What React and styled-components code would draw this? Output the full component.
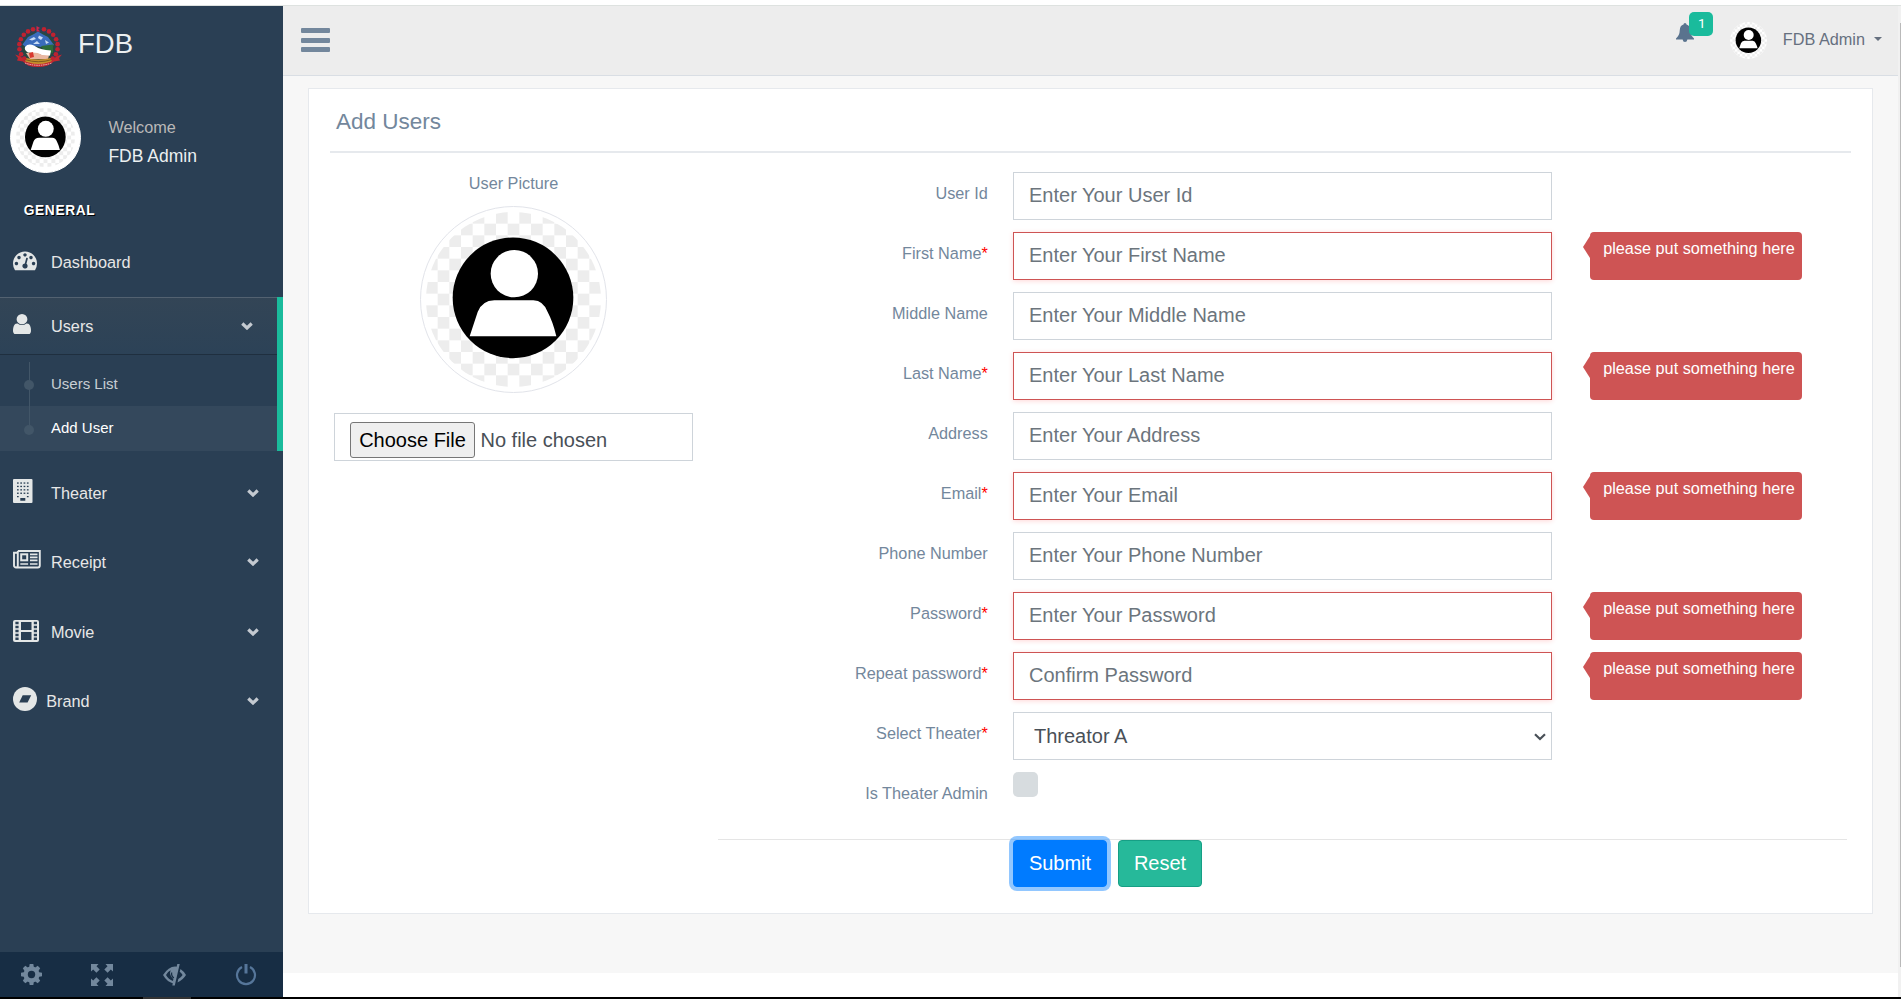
import React from "react";
import styled, { createGlobalStyle, css } from "styled-components";

const GlobalStyle = createGlobalStyle`
  *, *::before, *::after { box-sizing: border-box; }
  body {
    margin: 0;
    background: #fff;
    color: #73879c;
    font-family: Arial, "Liberation Sans", sans-serif;
    font-size: 16.25px;
    overflow: hidden;
  }
  input, select, button { font-family: inherit; }
`;

/* ---------- page frame ---------- */

const Page = styled.div`
  display: flex;
  flex-direction: column;
  height: 999px;
  width: 1901px;
`;

const TopStrip = styled.div`
  flex: none;
  height: 6px;
  background: #fff;
  border-bottom: 1px solid #dee2e0;
`;

const Body = styled.div`
  display: flex;
  height: 991px;
`;

const BottomStrip = styled.div`
  flex: none;
  height: 2px;
  padding-left: 143px;
  background: #000;
`;

const BottomMark = styled.div`
  width: 48px;
  height: 2px;
  background: #333;
`;

const ScrollTrack = styled.div`
  width: 3px;
  padding: 17px 0 0 2px;
  background: #f1f1f1;
`;

const ScrollThumb = styled.div`
  height: 944px;
  background: #b9b9b9;
`;

/* ---------- sidebar ---------- */

const Sidebar = styled.aside`
  display: flex;
  flex-direction: column;
  width: 283px;
  background: #2a3f54;
`;

const Brand = styled.div`
  display: flex;
  align-items: center;
  gap: 16px;
  height: 75px;
  padding-left: 15px;
  color: #ecf0f1;
  font-size: 27.5px;
  svg { margin-top: 5px; }
`;

const Profile = styled.div`
  display: flex;
  gap: 27px;
  padding: 21px 0 0 10.4px;
`;

const ProfileText = styled.div`
  padding-top: 13px;
  line-height: 24px;
`;

const Welcome = styled.div`
  color: #bab8b8;
`;

const ProfileName = styled.div`
  margin-top: 5px;
  color: #ecf0f1;
  font-size: 17.5px;
`;

const SectionTitle = styled.h3`
  margin: 28px 0 12px;
  padding-left: 23.75px;
  color: #fff;
  font-size: 13.75px;
  font-weight: bold;
  letter-spacing: 0.625px;
  line-height: 20px;
  text-shadow: 1px 1px #000;
  text-transform: uppercase;
`;

const MenuItem = styled.a`
  display: flex;
  align-items: center;
  height: ${(p) => (p.$active ? 57 : 58)}px;
  margin-bottom: ${(p) => p.$gap ?? 11.3}px;
  padding: 0 24px 0 13px;
  color: #e7e7e7;
  ${(p) =>
    p.$active &&
    css`
      padding-top: 1px;
      background: linear-gradient(#334556, #2c4257), #2a3f54;
      box-shadow: rgba(0, 0, 0, 0.25) 0 1px 0, inset rgba(255, 255, 255, 0.16) 0 1px 0;
    `}
`;

const MenuIcon = styled.span`
  display: flex;
  align-self: stretch;
  width: ${(p) => p.$width ?? 38}px;
  padding-top: ${(p) => p.$drop}px;
  color: #e4e7e7;
`;

const MenuLabel = styled.span`
  flex: 1;
`;

const ChevronIcon = styled.svg`
  margin-bottom: 1px;
`;

const ActiveGroup = styled.div`
  height: 154px;
  margin-bottom: 13.5px;
  border-right: 6px solid #1abb9c;
`;

const SubMenu = styled.ul`
  margin: 0;
  padding: 7px 0 0;
  list-style: none;
`;

const SubItem = styled.li`
  position: relative;
  height: 45px;
  padding-left: 51px;
  background: ${(p) => (p.$current ? "rgba(255, 255, 255, 0.05)" : "none")};
  color: ${(p) => (p.$current ? "#fff" : "rgba(255, 255, 255, 0.75)")};
  font-size: 15px;
  line-height: ${(p) => (p.$current ? 44 : 46)}px;

  &::before {
    content: "";
    position: absolute;
    left: 29px;
    top: ${(p) => (p.$current ? 0 : 1)}px;
    height: ${(p) => (p.$current ? 24 : 44)}px;
    width: 1px;
    background: #425668;
  }
  &::after {
    content: "";
    position: absolute;
    left: 24px;
    top: 19px;
    width: 10px;
    height: 10px;
    border-radius: 50%;
    background: #425668;
  }
`;

const SidebarFooter = styled.div`
  display: flex;
  justify-content: space-between;
  align-items: center;
  height: 45px;
  margin-top: auto;
  padding: 0 25.5px 0 20.5px;
  background: #172d44;
  color: #73889d;
`;

/* ---------- header ---------- */

const Main = styled.div`
  display: flex;
  flex-direction: column;
  width: 1615px;
`;

const Header = styled.header`
  display: flex;
  flex: none;
  justify-content: space-between;
  height: 70px;
  padding: 0 16px 0 18px;
  border-bottom: 1px solid #d9dee4;
  background: #ededed;
`;

const MenuToggle = styled.div`
  display: flex;
  flex-direction: column;
  gap: 4.6px;
  width: 29px;
  padding-top: 22px;
`;

const ToggleBar = styled.div`
  height: 5px;
  border-radius: 1px;
  background: #73879c;
`;

const HeaderRight = styled.div`
  display: flex;
  align-items: flex-start;
`;

const Bell = styled.div`
  position: relative;
  margin: 17px 36px 0 0;
  svg { display: block; }
`;

const Badge = styled.span`
  position: absolute;
  left: 13px;
  top: -11px;
  width: 24px;
  height: 24px;
  border-radius: 5px;
  background: #1abb9c;
  color: #fff;
  font-family: Roboto, sans-serif;
  font-size: 13.5px;
  line-height: 22.5px;
  padding-left: 2px;
  text-align: center;
`;

const HeaderAvatar = styled.div`
  display: flex;
  margin: 16px 16px 0 0;
`;

const HeaderUser = styled.div`
  display: flex;
  align-items: center;
  height: 66px;
  color: #66707f;
`;

const Caret = styled.span`
  margin: 0 0 0 9px;
  border: 4px solid transparent;
  border-top-color: #66707f;
  border-bottom: 0;
`;

/* ---------- card ---------- */

const Content = styled.main`
  flex: none;
  height: 897px;
  padding: 12px 25px 0;
  background: #f7f7f7;
`;

const Card = styled.section`
  height: 826px;
  padding: 0 21px;
  border: 1px solid #e6e9ed;
  background: #fff;
`;

const CardTitle = styled.h2`
  height: 64px;
  margin: 0;
  padding: 4px 6px 0;
  border-bottom: 2px solid #e6e9ed;
  font-size: 22.5px;
  font-weight: 400;
  line-height: 58px;
`;

const CardBody = styled.div`
  display: flex;
  gap: 25px;
  padding: 18px 4px 0;
`;

const PictureColumn = styled.div`
  display: flex;
  flex-direction: column;
  align-items: center;
  width: 359px;
`;

const PictureLabel = styled.div`
  margin-bottom: 11px;
  line-height: 24px;
`;

const AvatarFrame = styled.div`
  display: flex;
  flex: none;
  align-self: ${(p) => (p.$small ? "flex-start" : "center")};
  padding: 5px;
  border: 1px solid ${(p) => p.$border};
  border-radius: 50%;
  background: #fff;
`;

const FileField = styled.div`
  display: flex;
  align-items: center;
  align-self: stretch;
  gap: 5.5px;
  height: 48px;
  margin-top: 20px;
  padding: 6px 15px 0;
  border: 1px solid #ced4da;
  color: #495057;
  font-size: 20px;
`;

const FileButton = styled.button`
  width: 125px;
  height: 36px;
  padding: 0;
  border: 1px solid #767676;
  border-radius: 3px;
  background: #efefef;
  color: #000;
  font-size: 20px;
`;

const Form = styled.form`
  display: flex;
  flex-direction: column;
  gap: 12px;
  width: 1129px;
  padding-top: 1px;
`;

const Row = styled.div`
  display: flex;
  height: 48px;
`;

const Label = styled.label`
  width: 269.8px;
  margin-right: 25.2px;
  padding-top: 10px;
  line-height: 23px;
  text-align: right;
`;

const Required = styled.span`
  color: red;
`;

const control = css`
  width: 539px;
  height: 48px;
  border: 1px solid #ced4da;
  border-radius: 0;
  outline: 0;
  background: #fff;
  color: #495057;
  font-size: 20px;
`;

const Input = styled.input`
  ${control}
  padding: 0 15px 2px;
  &::placeholder { color: #6c757d; opacity: 1; }
  ${(p) =>
    p.$invalid &&
    css`
      border-color: #ce5454;
      box-shadow: 0 1px 5px rgba(255, 0, 0, 0.16);
    `}
`;

const SelectWrap = styled.div`
  position: relative;
  svg {
    position: absolute;
    right: 6px;
    top: 21px;
  }
`;

const Select = styled.select`
  ${control}
  appearance: none;
  padding: 0 20px;
`;

const Alert = styled.div`
  position: relative;
  width: 212px;
  margin-left: 38px;
  padding: 3.5px 0 0 13.2px;
  border-radius: 4px;
  background: #ce5454;
  color: #fff;
  line-height: 24px;
  white-space: nowrap;

  &::before {
    content: "";
    position: absolute;
    left: -7px;
    top: 4px;
    border: 11px solid transparent;
    border-left-width: 0;
    border-right: 7px solid #ce5454;
  }
`;

const CheckBox = styled.span`
  width: 25px;
  height: 25px;
  border-radius: 5px;
  background: #d7dcdf;
`;

const Actions = styled.div`
  display: flex;
  gap: 11px;
  margin-top: 7px;
  padding-left: 295px;
  border-top: 1px solid #e5e5e5;
`;

const Button = styled.button`
  width: ${(p) => p.$width}px;
  height: 47px;
  padding: 0;
  border: 1px solid ${(p) => p.$border};
  border-radius: 4px;
  background: ${(p) => p.$color};
  box-shadow: ${(p) => (p.$focused ? "0 0 0 4px rgba(38, 143, 255, 0.5)" : "none")};
  color: #fff;
  font-size: 20px;
`;

/* ---------- drawings ---------- */

const cells = [];
for (let r = 0; r < 15; r++)
  for (let c = 0; c < 15; c++) if ((r + c) % 2 === 0) cells.push([c * 35, r * 35]);

function Avatar({ size, id }) {
  return (
    <svg width={size} height={size} viewBox="0 0 525 525">
      <clipPath id={id}>
        <circle cx="262.5" cy="262.5" r="262.5" />
      </clipPath>
      <g clipPath={`url(#${id})`}>
        <rect width="525" height="525" fill="#fff" />
        {cells.map(([x, y]) => (
          <rect key={`${x}-${y}`} x={x} y={y} width="35" height="35" fill="#ededed" />
        ))}
        <circle cx="261" cy="257.5" r="181" fill="#000" />
        <circle cx="265" cy="185" r="71" fill="#fff" />
        <path
          d="M131 373 L155 300 Q168 266 205 265 H322 Q352 266 365 300 Q381 330 391 373 Z"
          fill="#fff"
        />
      </g>
    </svg>
  );
}

function Emblem() {
  const petals = [];
  for (let i = 0; i < 17; i++) {
    const a = ((-222 + i * 16.5) * Math.PI) / 180;
    if (i !== 8) petals.push([23.5 + 19.3 * Math.cos(a), 20.5 + 18 * Math.sin(a)]);
  }
  return (
    <svg width="47" height="41" viewBox="0 0 47 41">
      <ellipse cx="23.5" cy="21" rx="16.5" ry="15" fill="#28483f" />
      <path d="M7.500 18.500 L13 11 L19 8 L23 5.500 L28 8.500 L33 11 L39 19 L32 22 L20 20 L12 22Z" fill="#3a6cbc" />
      <path d="M14 13.500l5-2.500 2 2-4 1.500zM24 9.500l4 2-2 2.500-3-2zM30 14l4 2.500-3 1.500zM18 18l4-3 3 3z" fill="#c9dcf4" />
      <path d="M26 20 L38 18.500 L38 27 L30 26Z" fill="#2c6b3a" />
      <path d="M10 21 Q13 17 19 19.500 Q25 24 36 24.500 L35 29.500 Q30 31 25 28.500 Q19 27 13 26.500 Q9 24 10 21Z" fill="#fff" />
      <path d="M11 27 Q22 25.500 27 29 L34 29.500 L33 33 H15Z" fill="#e9b7a0" />
      <path d="M14 27l4-1 1 5-4 1z" fill="#d8392f" />
      <path d="M9 31.500 Q23 35.500 38 31.500 L37 36 Q23 41 10 36Z" fill="#c58f2c" />
      <path d="M10 33.500 Q23 38 37 33.500" fill="none" stroke="#7a5a20" strokeWidth="1" />
      {petals.map(([x, y], i) => (
        <circle key={i} cx={x} cy={y} r="2.3" fill="#bf2230" />
      ))}
      <path d="M21.500 0l3.500 2-2 1 2 2.500h-3.500z" fill="#d3264b" />
      <path
        d="M0 28.500 L6 30.500 Q9 36 14 36.500 Q23 39.500 33 36.500 Q38 35.500 41 30.500 L47 28.500 L44 32 L45 34.500 L39 35.500 Q33 41 23 41 Q12 41 8 35.500 L2 34.500 L3 32Z"
        fill="#c22730"
      />
      <path d="M10 37 Q23 41.500 37 37" fill="none" stroke="#e9bfc0" strokeWidth="1" strokeDasharray="1.500 .8" />
    </svg>
  );
}

const DashboardIcon = () => (
  <svg width="24" height="24" viewBox="0 0 1792 1792" fill="currentColor">
    <path d="M384 1152q0-53-37.5-90.5t-90.5-37.5-90.5 37.5-37.5 90.5 37.5 90.5 90.5 37.5 90.5-37.5 37.5-90.5zm192-448q0-53-37.5-90.5t-90.5-37.5-90.5 37.5-37.5 90.5 37.5 90.5 90.5 37.5 90.5-37.5 37.5-90.5zm428 481l101-382q6-26-7.5-48.5t-38.5-29.5-48 6.5-30 39.5l-101 382q-60 5-107 43.5t-63 98.5q-20 77 20 146t117 89 146-20 89-117q16-60-6-117t-72-91zm660-33q0-53-37.5-90.5t-90.5-37.5-90.5 37.5-37.5 90.5 37.5 90.5 90.5 37.5 90.5-37.5 37.5-90.5zm-640-640q0-53-37.5-90.5t-90.5-37.5-90.5 37.5-37.5 90.5 37.5 90.5 90.5 37.5 90.5-37.5 37.5-90.5zm448 192q0-53-37.5-90.5t-90.5-37.5-90.5 37.5-37.5 90.5 37.5 90.5 90.5 37.5 90.5-37.5 37.5-90.5zm320 448q0 261-141 483-19 29-54 29h-1402q-35 0-54-29-141-221-141-483 0-182 71-348t191-286 286-191 348-71 348 71 286 191 191 286 71 348z" />
  </svg>
);

const UserIcon = () => (
  <svg width="18" height="20.5" viewBox="256 128 1280 1536" preserveAspectRatio="none" fill="currentColor">
    <path d="M1536 1399q0 109-62.5 187t-150.5 78h-854q-88 0-150.5-78t-62.5-187q0-85 8.5-160.5t31.5-152 58.5-131 94-89 134.5-34.5q131 128 313 128t313-128q76 0 134.5 34.5t94 89 58.5 131 31.5 152 8.5 160.5zm-256-887q0 159-112.5 271.5t-271.5 112.5-271.5-112.5-112.5-271.5 112.5-271.5 271.5-112.5 271.5 112.5 112.5 271.5z" />
  </svg>
);

const BuildingIcon = () => (
  <svg width="20" height="24" viewBox="0 0 20 24">
    <rect width="19.5" height="24" rx="1" fill="currentColor" />
    {[3.4, 6.8, 10.2, 13.6].map((y) =>
      [4, 7.3, 10.6, 13.9].map((x) => (
        <rect key={`${x}-${y}`} x={x} y={y} width="1.7" height="1.3" fill="#2a3f54" />
      ))
    )}
    <path d="M4 17h1.700v1.300H4zM13.900 17h1.700v1.300h-1.700zM7.300 19h5v2.800h-5z" fill="#2a3f54" />
  </svg>
);

const NewspaperIcon = () => (
  <svg width="28" height="19" viewBox="0 0 28 19" fill="none" stroke="currentColor">
    <path d="M4.800 1h22v14.500a2 2 0 0 1-2 2H3a2 2 0 0 1-2-2V2.800h3.500M4.800 1v14.500a1.800 1.800 0 0 1-1.800 2" strokeWidth="1.900" />
    <rect x="8.200" y="4.300" width="6" height="6" strokeWidth="2" />
    <path d="M17 4.300h7.500M17 7.300h7.500M17 10.300h7.500M7.300 14h7.800M17 14h7.500" strokeWidth="1.700" />
  </svg>
);

const FilmIcon = () => (
  <svg width="26" height="22" viewBox="0 0 26 22">
    <rect width="26" height="22" rx="2" fill="currentColor" />
    <path d="M8 2h10.500v8H8zM8 12h10.500v8H8z" fill="#2a3f54" />
    {[1.8, 5.8, 9.8, 13.8, 17.6].map((y) => (
      <path key={y} d={`M2.400 ${y}h3.200v2.400h-3.200zM20.800 ${y}h3.200v2.400h-3.200z`} fill="#2a3f54" />
    ))}
  </svg>
);

const BrandIcon = () => (
  <svg width="24" height="24" viewBox="0 0 24 24">
    <circle cx="12" cy="12" r="12" fill="currentColor" />
    <path d="M9.700 8.300h8.500l-3.600 7.300H6.200z" fill="#2a3f54" />
  </svg>
);

const Chevron = () => (
  <ChevronIcon width="12" height="8" viewBox="0 0 12 8">
    <path d="M1.300 1.500l4.700 4.500 4.700-4.500" fill="none" stroke="#c4cad1" strokeWidth="3.200" />
  </ChevronIcon>
);

const CogIcon = () => (
  <svg width="21" height="21" viewBox="0 0 21 21" fill="currentColor">
    {[0, 45, 90, 135].map((a) => (
      <path key={a} d="M8.700 0h3.600l.7 4v13l-.7 4H8.700L8 17V4z" transform={`rotate(${a} 10.500 10.500)`} />
    ))}
    <circle cx="10.500" cy="10.500" r="8" />
    <circle cx="10.500" cy="10.500" r="3.700" fill="#172d44" />
  </svg>
);

const FullscreenIcon = () => (
  <svg width="22" height="22" viewBox="0 0 22 22" fill="currentColor">
    {[0, 90, 180, 270].map((a) => (
      <path key={a} d="M0 0h7.500L5.500 2.200 8.700 5.400 5.400 8.700 2.200 5.500 0 7.500z" transform={`rotate(${a} 11 11)`} />
    ))}
  </svg>
);

const EyeCloseIcon = () => (
  <svg width="23" height="22" viewBox="0 0 23 22">
    <path d="M0 11Q5.500 2.500 12 2.500l2.600.3L10.300 19.400Q4 18 0 11z" fill="currentColor" />
    <path d="M3 11Q5 7.500 7.600 6.200 5.800 11 10.500 15.200l-.5 1.700Q5.500 15.500 3 11z" fill="#172d44" />
    <path d="M8.700 8.500Q8 12 11 14" fill="none" stroke="#172d44" strokeWidth="1.200" />
    <path d="M14.300 0h2.400L11.800 21.500H9.300z" fill="currentColor" />
    <path d="M17.500 5Q20.500 7 23 11q-3 5-8.500 7.400l.8-3.300Q18 13.500 19.600 11 18.500 9 16.700 7.700z" fill="currentColor" />
  </svg>
);

const PowerIcon = () => (
  <svg width="22" height="22" viewBox="0 0 22 22" fill="none" stroke="#56769a">
    <path d="M7 3.100a9 9 0 1 0 8 0" strokeWidth="2.200" />
    <path d="M11 0v9.500" strokeWidth="3" />
  </svg>
);

const BellIcon = () => (
  <svg width="18" height="19" viewBox="0 0 18 19" fill="#5a738e">
    <path d="M9 0q1.500 0 1.500 1.600Q14 2.600 14.200 7q.2 5.500 3.800 8.500v1H0v-1Q3.600 12.500 3.800 7 4 2.600 7.500 1.600 7.500 0 9 0zM6.600 16.500h4.800Q11 19 9 19t-2.400-2.500z" />
  </svg>
);

/* ---------- data ---------- */

const fields = [
  { label: "User Id", placeholder: "Enter Your User Id" },
  { label: "First Name", placeholder: "Enter Your First Name", required: true },
  { label: "Middle Name", placeholder: "Enter Your Middle Name" },
  { label: "Last Name", placeholder: "Enter Your Last Name", required: true },
  { label: "Address", placeholder: "Enter Your Address" },
  { label: "Email", placeholder: "Enter Your Email", required: true },
  { label: "Phone Number", placeholder: "Enter Your Phone Number" },
  { label: "Password", placeholder: "Enter Your Password", required: true },
  { label: "Repeat password", placeholder: "Confirm Password", required: true },
];

const sections = [
  { label: "Theater", icon: BuildingIcon, drop: 14.5 },
  { label: "Receipt", icon: NewspaperIcon, drop: 15.8 },
  { label: "Movie", icon: FilmIcon, drop: 17 },
  { label: "Brand", icon: BrandIcon, drop: 14.8, width: 33.2 },
];

export default function App() {
  return (
    <>
      <GlobalStyle />
      <Page>
        <TopStrip />
        <Body>
          <Sidebar>
            <Brand>
              <Emblem />
              FDB
            </Brand>
            <Profile>
              <AvatarFrame $border="#fff" $small>
                <Avatar size={59} id="side" />
              </AvatarFrame>
              <ProfileText>
                <Welcome>Welcome</Welcome>
                <ProfileName>FDB Admin</ProfileName>
              </ProfileText>
            </Profile>
            <SectionTitle>General</SectionTitle>
            <MenuItem $gap={6}>
              <MenuIcon $drop={14.5}>
                <DashboardIcon />
              </MenuIcon>
              <MenuLabel>Dashboard</MenuLabel>
            </MenuItem>
            <ActiveGroup>
              <MenuItem $active $gap={0}>
                <MenuIcon $drop={15.5}>
                  <UserIcon />
                </MenuIcon>
                <MenuLabel>Users</MenuLabel>
                <Chevron />
              </MenuItem>
              <SubMenu>
                <SubItem>Users List</SubItem>
                <SubItem $current>Add User</SubItem>
              </SubMenu>
            </ActiveGroup>
            {sections.map(({ label, icon: Icon, drop, width }) => (
              <MenuItem key={label}>
                <MenuIcon $drop={drop} $width={width}>
                  <Icon />
                </MenuIcon>
                <MenuLabel>{label}</MenuLabel>
                <Chevron />
              </MenuItem>
            ))}
            <SidebarFooter>
              <CogIcon />
              <FullscreenIcon />
              <EyeCloseIcon />
              <PowerIcon />
            </SidebarFooter>
          </Sidebar>

          <Main>
            <Header>
              <MenuToggle>
                <ToggleBar />
                <ToggleBar />
                <ToggleBar />
              </MenuToggle>
              <HeaderRight>
                <Bell>
                  <BellIcon />
                  <Badge>1</Badge>
                </Bell>
                <HeaderAvatar>
                  <Avatar size={37} id="top" />
                </HeaderAvatar>
                <HeaderUser>
                  FDB Admin
                  <Caret />
                </HeaderUser>
              </HeaderRight>
            </Header>

            <Content>
              <Card>
                <CardTitle>Add Users</CardTitle>
                <CardBody>
                  <PictureColumn>
                    <PictureLabel>User Picture</PictureLabel>
                    <AvatarFrame $border="#e2e4ea">
                      <Avatar size={175} id="picture" />
                    </AvatarFrame>
                    <FileField>
                      <FileButton type="button">Choose File</FileButton>
                      No file chosen
                    </FileField>
                  </PictureColumn>

                  <Form>
                    {fields.map(({ label, placeholder, required }) => (
                      <Row key={label}>
                        <Label>
                          {label}
                          {required && <Required>*</Required>}
                        </Label>
                        <Input placeholder={placeholder} $invalid={required} />
                        {required && <Alert>please put something here</Alert>}
                      </Row>
                    ))}
                    <Row>
                      <Label>
                        Select Theater<Required>*</Required>
                      </Label>
                      <SelectWrap>
                        <Select>
                          <option>Threator A</option>
                        </Select>
                        <svg width="12" height="8" viewBox="0 0 12 8">
                          <path d="M1 1.200l5 4.800 5-4.800" fill="none" stroke="#495057" strokeWidth="2.200" />
                        </svg>
                      </SelectWrap>
                    </Row>
                    <Row>
                      <Label>Is Theater Admin</Label>
                      <CheckBox />
                    </Row>
                    <Actions>
                      <Button type="button" $width={94} $color="#007bff" $border="#007bff" $focused>
                        Submit
                      </Button>
                      <Button type="button" $width={84} $color="#26b99a" $border="#169f85">
                        Reset
                      </Button>
                    </Actions>
                  </Form>
                </CardBody>
              </Card>
            </Content>
          </Main>
          <ScrollTrack>
            <ScrollThumb />
          </ScrollTrack>
        </Body>
        <BottomStrip>
          <BottomMark />
        </BottomStrip>
      </Page>
    </>
  );
}
